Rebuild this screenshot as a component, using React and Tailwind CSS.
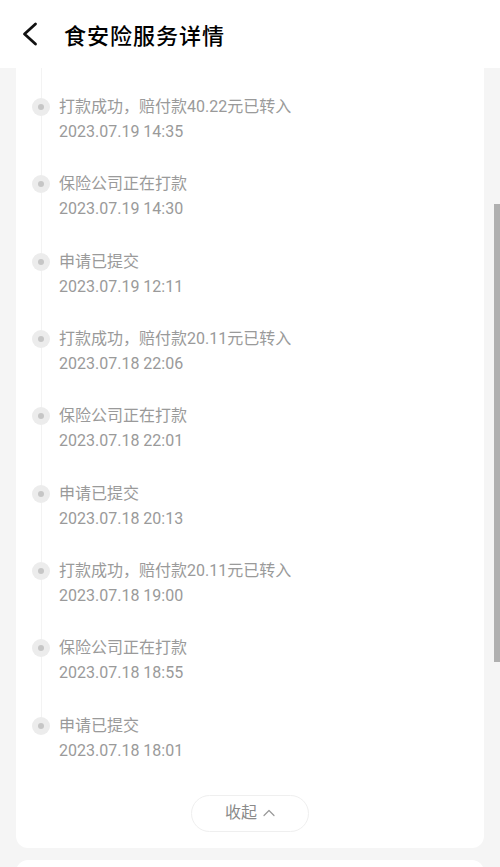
import React from "react";

const items = [
  ["打款成功，赔付款40.22元已转入", "2023.07.19 14:35"],
  ["保险公司正在打款", "2023.07.19 14:30"],
  ["申请已提交", "2023.07.19 12:11"],
  ["打款成功，赔付款20.11元已转入", "2023.07.18 22:06"],
  ["保险公司正在打款", "2023.07.18 22:01"],
  ["申请已提交", "2023.07.18 20:13"],
  ["打款成功，赔付款20.11元已转入", "2023.07.18 19:00"],
  ["保险公司正在打款", "2023.07.18 18:55"],
  ["申请已提交", "2023.07.18 18:01"],
];

export default function App() {
  return (
    <div
      className="relative w-[500px] h-[867px] overflow-hidden bg-[#f5f5f5]"
      style={{ fontFamily: 'Roboto, "Noto Sans CJK SC", sans-serif' }}
    >
      <header className="h-[68px] bg-white flex items-center">
        <svg width="20" height="26" viewBox="0 0 20 26" className="ml-[20px]" fill="none">
          <path d="M15.5 3 L4.5 13 L15.5 23" stroke="#111" strokeWidth="2.8" strokeLinecap="round" strokeLinejoin="round" />
        </svg>
        <h1
          className="ml-[24px] text-[22px] font-medium text-black tracking-[1px] leading-none"
          style={{ fontFamily: '"Noto Sans CJK SC", sans-serif' }}
        >
          食安险服务详情
        </h1>
      </header>

      <div className="px-4">
        <div className="bg-white rounded-b-[12px] pt-[27px] pb-[16px]">
          <div className="relative pl-[16px]">
            <div className="absolute left-[24.5px] top-[-27px] h-[657px] w-px bg-[#f3f3f3]" />
            {items.map(([title, date], i) => (
              <div key={i} className="relative flex h-[77.33px]">
                <div className="w-[18px] h-[24px] flex items-center">
                  <div className="w-[18px] h-[18px] rounded-full bg-[#ececec] flex items-center justify-center">
                    <div className="w-[6px] h-[6px] rounded-full bg-[#c6c6c6]" />
                  </div>
                </div>
                <div className="ml-[9px] text-[16px] text-[#9a9a9a]">
                  <div className="leading-[24px]">{title}</div>
                  <div className="leading-[25px]">{date}</div>
                </div>
              </div>
            ))}
          </div>
          <div className="mt-[4px] mx-auto w-[118px] h-[37px] rounded-full border border-[#efefef] flex items-center justify-center text-[16px] text-[#8a8a8a]">
            <span className="leading-none">收起</span>
            <svg width="12" height="8" viewBox="0 0 12 8" className="ml-[6px]" fill="none">
              <path d="M1 6.5 L6 1.5 L11 6.5" stroke="#999" strokeWidth="1.2" strokeLinecap="round" strokeLinejoin="round" />
            </svg>
          </div>
        </div>
        <div className="mt-[12px] h-[40px] bg-white rounded-t-[12px]" />
      </div>

      <div className="absolute right-0 top-[204px] w-[6px] h-[458px] bg-[#b0b0b0]" />
    </div>
  );
}
